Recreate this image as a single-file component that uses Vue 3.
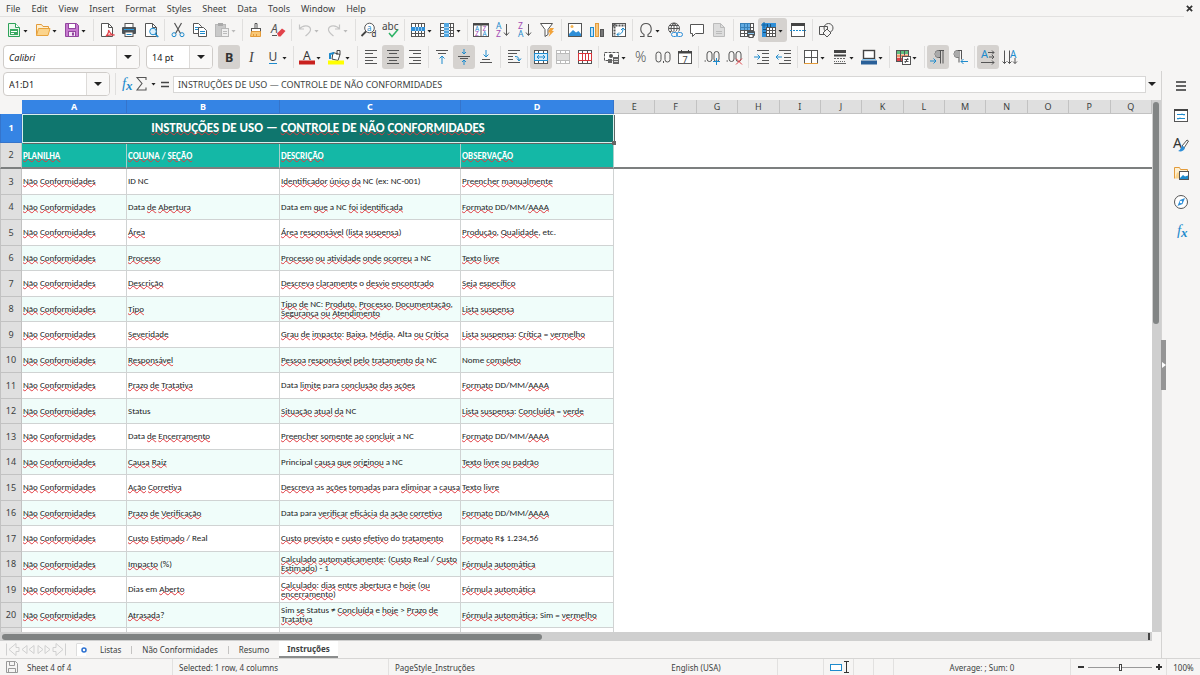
<script setup>
import { ref } from 'vue'

const K = '#555'
const B = '#1e8bcd'

const line = (d, c = K, w = 1) => `<path d="${d}" fill="none" stroke="${c}" stroke-width="${w}"/>`
const grid = (c = K) =>
  `<rect x="1.5" y="1.5" width="13" height="13" fill="#fff" stroke="${c}"/>` +
  line('M1.5 5.5h13M1.5 8.5h13M1.5 11.5h13M5.5 1.5v13M8.5 1.5v13M11.5 1.5v13', c)
const letter = (t, x, y, size, c = K, extra = '') =>
  `<text x="${x}" y="${y}" font-size="${size}" fill="${c}" font-family="Noto Sans, sans-serif" ${extra}>${t}</text>`
const lines = (rows, c = K) => line(rows.map(([x, y, w]) => `M${x} ${y}.5h${w}`).join(''), c)
const page = (c = K, f = '#fff') =>
  `<path d="M2.5 1.5h7l4 4v9h-11z" fill="${f}" stroke="${c}"/>` + line('M9.5 1.5v4h4', c)
const merge = (c, inner) =>
  `<rect x="1.5" y="1.5" width="13" height="13" fill="#fff" stroke="${c}"/>` +
  line('M1.5 4.5h13M1.5 11.5h13M5.5 1.5v3M10.5 1.5v3M5.5 11.5v3M10.5 11.5v3', c) + inner

const icons = {
  new: '<path d="M2.5 1.5h7l4 4v9h-11z" fill="#e9f7ec" stroke="#2fa35a"/><path d="M9.5 1.5v4h4" fill="#fff" stroke="#2fa35a"/><rect x="4" y="7" width="8" height="6" fill="#39a961"/><path d="M5 9.500h6M5 11.500h3" stroke="#fff"/>',
  open: '<path d="M1.500 13.500v-11h5l1.500 2h5.500v2" fill="#fdf0d3" stroke="#e39b3a"/><path d="M1.500 13.500l2-7h11.500l-2 7z" fill="#fbd48d" stroke="#e8a33d"/>',
  save: '<path d="M1.500 1.500h11l2 2v11h-13z" fill="#c77ad0" stroke="#93479f"/><rect x="4.500" y="1.500" width="7" height="5" fill="#fff" stroke="#93479f"/><rect x="4.500" y="9.500" width="7" height="5" fill="#f5e9f7" stroke="#93479f"/><path d="M9 10.500v3" stroke="#93479f" stroke-width="2"/>',
  pdf: page() + '<path d="M7 14c2-2 3-4 2.500-6c2 4 3 5 6 5c-3-.5-6 0-8.500 1" fill="none" stroke="#e2434b" stroke-width="1.300"/>',
  print: '<rect x="4" y="1.500" width="8" height="5" fill="#fff" stroke="#555"/><rect x="1" y="5" width="14" height="7" rx="1" fill="#4b5359"/><path d="M3 7.500h10" stroke="#2f9be0"/><rect x="4" y="10" width="8" height="4.500" fill="#fff" stroke="#555"/><path d="M5.500 12.500h5" stroke="#1e8bcd"/>',
  preview: page() + '<circle cx="10" cy="9.500" r="3.300" fill="#dff0fb" stroke="#1e8bcd"/><path d="M12.300 12l3 3" stroke="#1e8bcd" stroke-width="1.500"/>',
  cut: line('M4.500 1l6 10.500M11.500 1l-6 10.500', K, 1.2) + '<circle cx="4" cy="12.700" r="2" fill="none" stroke="#1e8bcd"/><circle cx="12" cy="12.700" r="2" fill="none" stroke="#1e8bcd"/>',
  copy: '<path d="M1.500 1.500h5l3 3v7h-8z" fill="#fff" stroke="#555"/><path d="M3 5.500h5M3 7.500h4" stroke="#1e8bcd"/><path d="M6.500 5.500h5l3 3v6h-8z" fill="#fff" stroke="#555"/><path d="M8 9.500h5M8 11.500h5" stroke="#1e8bcd"/>',
  paste: '<rect x="1.500" y="2.500" width="10" height="12" fill="#c9c9c9" stroke="#b8b8b8"/><rect x="4" y="1" width="5" height="3" fill="#aaa"/><rect x="7.500" y="6.500" width="7" height="8" fill="#efefef" stroke="#b8b8b8"/><path d="M9 9.500h4M9 11.500h4" stroke="#bbb"/>',
  brush: '<path d="M7 1.500h2v5h-2z" fill="#fff" stroke="#555"/><rect x="3.500" y="6.500" width="9" height="3" fill="#fff" stroke="#555"/><path d="M3.500 9.500h9v5h-10z" fill="#f9c877" stroke="#e39b3a"/><path d="M5.500 14v-2M8.500 14v-2" stroke="#e39b3a"/>',
  clear: letter('A', 1, 11, 12, K, 'font-style="italic"') + '<path d="M2 13.500h5" stroke="#555"/><path d="M7 11.500l5-5 3.500 2.500-5 5.500h-2z" fill="#e2434b"/>',
  undo: line('M2.500 2.500v4.500h4.500M2.500 7c3-4 10-4.500 11 0c.5 3-2.500 5-5 7', '#c4c4c4', 1.2),
  redo: line('M13.500 2.500v4.500h-4.500M13.500 7c-3-4-10-4.500-11 0c-.5 3 2.500 5 5 7', '#c4c4c4', 1.2),
  find: '<circle cx="8.500" cy="6" r="4.800" fill="#fff" stroke="#555"/><path d="M5 9.500l-4.500 4.500" stroke="#444" stroke-width="1.800"/>' + letter('a', 6, 9, 8, B) + letter('d', 10.5, 15, 8, '#333'),
  spell: letter('abc', -1, 8, 10, '#444') + line('M6 11l3 3.500 6-7', '#2eb366', 1.5),
  row: grid() + '<path d="M1 5h14v4h-14z" fill="#2f8fd8"/>' + line('M5.5 5v4M8.5 5v4M11.5 5v4', '#8cc4ee'),
  col: grid() + '<path d="M5 1h5v14h-5z" fill="#53a8e2"/>' + line('M5 5.5h5M5 8.5h5M5 11.5h5', '#a9d4f2'),
  sort: '<rect x=".5" y="1.500" width="15" height="13" fill="#fff" stroke="#555"/><path d="M0 2.500h16" stroke="#444" stroke-width="2"/><path d="M8 2v13" stroke="#555"/>' + letter('A', 2, 8.7, 6.5, B) + letter('Z', 2, 14.3, 6.5, '#a24bb3') + letter('Z', 9.5, 8.7, 6.5, '#a24bb3') + letter('A', 9.5, 14.3, 6.5, B),
  az: letter('A', 1, 7, 8.5, B) + letter('Z', 1, 15, 8.5, '#a24bb3') + line('M11.500 2v11M9 10.500l2.500 3 2.500-3'),
  za: letter('Z', 1, 7, 8.5, '#a24bb3') + letter('A', 1, 15, 8.5, B) + line('M11.500 2v11M9 10.500l2.500 3 2.500-3'),
  filter: '<path d="M1.500 1.500h12l-4.500 6v5l-3 2v-7z" fill="#fff" stroke="#555"/><path d="M11 6h4l-2 3h2l-5.500 6 1.500-4.500h-2z" fill="#f2a33a"/>',
  image: '<rect x="1.500" y="1.500" width="13" height="13" fill="#fff" stroke="#555"/><path d="M2 12l4-4 3 2.500 2.500-1.500 2.500 3v2h-12z" fill="#2f8fd8"/><circle cx="5" cy="4.500" r="1.500" fill="#f5b451"/>',
  chart: '<rect x="1.500" y="5.500" width="3" height="9" fill="#bfe0f7" stroke="#1e8bcd"/><rect x="6.500" y="1.500" width="3" height="13" fill="#f7c77f" stroke="#e39b3a"/><rect x="11.500" y="7.500" width="3" height="7" fill="#777" stroke="#555"/>',
  pivot: '<rect x="1.500" y="1.500" width="13" height="13" fill="#fff" stroke="#555"/><path d="M1.500 3.500h13M3.500 1.500v13" stroke="#555" stroke-width="2" stroke-dasharray="2 1"/>' + line('M6 12.500c4 0 6-2 6-6M10 8l2-2 2 2M8 10.500l-2 2 2 2', B),
  omega: line('M2 14.500h4v-2c-5-3-4-11 2-11s7 8 2 11v2h4', K, 1.1),
  link: '<circle cx="7" cy="6.500" r="5.500" fill="#fff" stroke="#555"/>' + line('M1.500 6.500h11M7 1v11M3 3.500h8M3 9.500h4M7 1c-4 3-4 8 0 11M7 1c4 3 4 7 1 9') + '<path d="M4 9.500h12v6h-12z" fill="#f6f5f4"/><rect x="4.500" y="10.500" width="6" height="4" rx="2" fill="none" stroke="#2f8fd8"/><rect x="9.500" y="10.500" width="6" height="4" rx="2" fill="none" stroke="#2f8fd8"/>',
  comment: '<path d="M1.500 2.500h13v9h-8l-3 3v-3h-2z" fill="#fff" stroke="#555"/>',
  header: page('#bbb', '#ddd') + '<path d="M5 9.500h6M5 11.500h6" stroke="#bbb"/>',
  printarea: grid() + '<path d="M1 1h10v7h-10z" fill="#2f8fd8" opacity=".75"/><rect x="8" y="9" width="8" height="5" rx="1" fill="#4b5359"/><path d="M9 11.500h6" stroke="#8cc8f2"/><rect x="10" y="12.500" width="4" height="3" fill="#fff" stroke="#555"/>',
  freeze: grid() + '<path d="M1 1h14v4h-14zM1 1h4v14h-4z" fill="#2f8fd8"/><path d="M6.500 2v3M9.500 2v3M2 7.500h3M2 10.500h3" stroke="#174f7c"/><path d="M3 0v6M0 3h6" stroke="#1566a3"/>',
  split: '<rect x="1.500" y="1.500" width="13" height="13" fill="#fff" stroke="#555"/><path d="M1 2.500h14" stroke="#444" stroke-width="3"/><path d="M0 8.500h16" stroke="#1e8bcd" stroke-dasharray="2 1"/>',
  shapes: '<path d="M1.500 4.500h8v8h-8z" fill="none" stroke="#555"/><circle cx="10.500" cy="6" r="4.500" fill="none" stroke="#555"/><path d="M9 7l4 4-4 4-4-4z" fill="#f6f5f4" stroke="#555"/>',
  bold: letter('B', 4, 12.500, 12.5, '#333', 'font-weight="700"'),
  italic: '<text x="6" y="12.500" font-size="14" font-style="italic" fill="#444" font-family="Liberation Serif, serif">I</text>',
  underline: letter('U', 3.5, 11.500, 12, '#444') + '<path d="M4 14.500h8" stroke="#1e8bcd"/>',
  fontcolor: letter('A', 4, 10.500, 12, '#333') + '<path d="M0 13.500h16" stroke="#c9211e" stroke-width="4"/>',
  fill: '<path d="M5 3.500l7 2-2 6-6-1.500z" fill="#fff" stroke="#444"/><path d="M2 10v-5l4-1" fill="none" stroke="#1e8bcd" stroke-width="2"/><path d="M9 6v-4.500h3v4" fill="none" stroke="#444"/><path d="M0 13.500h16" stroke="#ff0" stroke-width="4"/>',
  left: lines([[2, 1, 12], [2, 4, 8], [2, 8, 12], [2, 11, 8], [2, 14, 12]]),
  center: lines([[2, 1, 12], [4, 4, 8], [2, 8, 12], [4, 11, 8], [2, 14, 12]]),
  right: lines([[2, 1, 12], [6, 4, 8], [2, 8, 12], [6, 11, 8], [2, 14, 12]]),
  top: lines([[2, 1, 12], [4, 4, 8]]) + line('M8 15v-8M5.500 9.500l2.500-2.500 2.500 2.500', B),
  middle: lines([[2, 7, 12], [4, 9, 8]]) + line('M8 0v5M6 3l2 2 2-2M8 16v-5M6 13l2-2 2 2', B),
  bottom: lines([[4, 10, 8], [2, 13, 12]]) + line('M8 1v7M5.500 5.500l2.500 2.500 2.500-2.500', B),
  wrap: lines([[2, 1, 12], [2, 4, 9], [2, 7, 5], [2, 10, 5], [2, 13, 12]]) + line('M9 7.500c3 0 4 1 4 4M11 9.500l2 2.500 2-2.500', B),
  merge: merge(K, '<rect x="1.500" y="4.500" width="13" height="7" fill="#d8edfb" stroke="#1e8bcd"/>' + line('M4 8h8M6 6l-2 2 2 2M10 6l2 2-2 2', B)),
  mergecells: merge('#bbb', '<rect x="2" y="5" width="12" height="6" fill="#ddd"/>'),
  unmerge: merge(K, '<rect x="1.500" y="4.500" width="13" height="7" fill="#fff" stroke="#d8343a"/>' + line('M5.500 4.500v7M8.500 4.500v7M11.500 4.500v7', '#d8343a')),
  currency: '<rect x="0.500" y="3.500" width="14" height="8" fill="#fff" stroke="#555" stroke-dasharray="3 1"/><circle cx="7" cy="7" r="2" fill="#555"/><path d="M4 10h4v4h-4zM9 8h6v7h-6z" fill="#666"/><path d="M10 10.500h4M10 12.500h4" stroke="#ddd"/>',
  percent: letter('%', 2, 13, 14, K, 'font-weight="300"'),
  number: '<rect x="1" y="3" width="5" height="10" rx="2.500" fill="none" stroke="#555"/><rect x="10" y="3" width="5" height="10" rx="2.500" fill="none" stroke="#555"/><path d="M8.500 12v2" stroke="#555"/>',
  date: '<rect x="1.500" y="2.500" width="13" height="12" fill="#fff" stroke="#555"/><path d="M1 3.500h14" stroke="#444" stroke-width="2"/><path d="M4.500 1v3M11.500 1v3" stroke="#444"/>' + letter('7', 5.500, 13.500, 9, '#444'),
  adddec: '<rect x="3" y="2.500" width="5" height="10" rx="2.500" fill="none" stroke="#555"/><rect x="10" y="2.500" width="5" height="10" rx="2.500" fill="none" stroke="#555"/><path d="M.5 12h1.500" stroke="#555"/><path d="M9 12.500h7M12.500 9v7" stroke="#1e8bcd"/>',
  deldec: '<rect x="3" y="2.500" width="5" height="10" rx="2.500" fill="none" stroke="#555"/><rect x="10" y="2.500" width="5" height="10" rx="2.500" fill="none" stroke="#555"/><path d="M.5 12h1.500" stroke="#555"/><path d="M10 9.500l6 6M16 9.500l-6 6" stroke="#e2434b"/>',
  indent: lines([[3, 1, 12], [8, 4, 7], [8, 8, 7], [8, 11, 7], [3, 14, 12]]) + line('M0 8h6M3.500 5.500l2.500 2.500-2.500 2.500', B),
  outdent: lines([[3, 1, 12], [8, 4, 7], [8, 8, 7], [8, 11, 7], [3, 14, 12]]) + line('M0 8h6M2.500 5.500l-2.500 2.500 2.500 2.500', B),
  borders: '<rect x="1.500" y="1.500" width="13" height="13" fill="#fff" stroke="#555"/>' + line('M8.500 1.500v13M1.500 8.500h13') + line('M1 14.500h14', '#e39b3a'),
  borderstyle: '<path d="M2 2.500h12" stroke="#444" stroke-width="3"/><path d="M2 6.500h12" stroke="#444" stroke-width="2"/><path d="M2 9.500h12" stroke="#666" stroke-dasharray="2 1"/><path d="M2 12.500h12" stroke="#666" stroke-dasharray="1 1"/><path d="M2 14.500h12" stroke="#666"/>',
  bordercolor: '<rect x="2.500" y="1.500" width="11" height="8" fill="#fff" stroke="#444" stroke-width="1.400"/><path d="M1 10.500h14" stroke="#8cc8f2"/><path d="M0 13.500h16" stroke="#2a6099" stroke-width="4"/>',
  cond: '<rect x="1.500" y="1.500" width="12" height="11" fill="#fff" stroke="#555"/><path d="M2 2h11v3h-11z" fill="#5fbf7e"/><path d="M2 5.500h11v3h-11z" fill="#f0956a"/><path d="M2 9h6v3h-6z" fill="#e2434b"/>' + line('M5.500 1.500v11M9.500 1.500v5') + '<rect x="7.500" y="7.500" width="8" height="8" fill="#fff" stroke="#555"/>' + line('M9.500 10.500h4M9.500 12.500h4M13 9l-3 5'),
  ltr: line('M14 1.500h-5.500a3.500 3.500 0 0 0 0 7h1.500M10.500 1.500v13M13 1.500v13') + '<path d="M9 2h-1a3 3 0 0 0 0 6h2v-6z" fill="#aaa"/>' + line('M0 12h6M3.500 9.500l2.500 2.500-2.500 2.500', B),
  rtl: line('M10 1.500h-4.500a3.500 3.500 0 0 0 0 7h1M7 1.500v12M9.500 1.500v9') + '<path d="M6 2h-1a3 3 0 0 0 0 6h2v-6z" fill="#aaa"/>' + line('M9 12.500h7M11.500 10l-2.500 2.500 2.500 2.500', B),
  horiz: letter('A', 1, 9, 11, B) + line('M8 3.500h6M12 1.500l2 2-2 2M9 8h5M12 6l2 2-2 2M1 13.500h13M12 11.500l2 2-2 2'),
  vert: letter('A', 8, 9, 10, B) + line('M2.500 1.500v13M.5 12.500l2 2 2-2M7.500 1.500v13M5.500 12.500l2 2 2-2M13 9v5.500M11 12.500l2 2 2-2'),
  fx: '<text x="4" y="12" font-size="15" font-style="italic" fill="#1e8bcd" font-family="Liberation Serif, serif">f</text><text x="8" y="14" font-size="13" font-style="italic" font-weight="700" fill="#1e8bcd" font-family="Liberation Serif, serif">x</text>',
  sum: line('M12 4v-2.500h-9l5 6-5 6.500h9v-2.500', K, 1.1),
  equal: '<path d="M4 6.500h8M4 10.500h8" stroke="#444" stroke-width="1.500"/>',
  menu: '<path d="M3 4h10M3 8h10M3 12h10" stroke="#333" stroke-width="1.500"/>',
  props: '<rect x="1.500" y="2.500" width="13" height="12" fill="#fff" stroke="#555"/><path d="M1 3h14" stroke="#444" stroke-width="2"/><path d="M4 7.500h8M4 11.500h8" stroke="#1e8bcd"/><path d="M9 6.500l2 2M7 10.500l-2 2" stroke="#1e8bcd"/>',
  styles: letter('A', 0, 12, 14, '#333') + '<path d="M9 10l5-6 1.500 1-4.500 7z" fill="#fff" stroke="#555"/><path d="M10 10l2 2c-1 3-4 4-7 3c3-1 2-4 5-5" fill="#2f8fd8"/>',
  gallery: '<path d="M1.500 13.500v-11h5l1 2h7v2" fill="#fdf0d3" stroke="#e39b3a"/><path d="M2 13.500l2-6h4v6z" fill="#fbd48d"/><rect x="6.500" y="6.500" width="9" height="8" fill="#fff" stroke="#555"/><path d="M7 13l3-3 2 1.500 3-1v3.500h-8z" fill="#1e8bcd"/>',
  navigator: '<circle cx="8" cy="8" r="6.500" fill="#fff" stroke="#555"/><path d="M12 4l-2.500 6-5 2 2.500-6z" fill="#2f8fd8"/><circle cx="8" cy="8" r="1.200" fill="#fff"/>',
  addsheet: '<path d="M2.500 2v12M2.500 1.500h6l2 2" fill="none" stroke="#ddd"/><path d="M3 2h6l3 3v9h-9z" fill="#fff"/><circle cx="10" cy="8" r="2" fill="none" stroke="#2a6fd0" stroke-width="1.500"/>',
  floppy: '<path d="M2.500 2.500h9l2 2v9h-11z" fill="none" stroke="#999"/><path d="M5.500 2.500v4h5v-4M4.500 13.500v-4h7v4" fill="none" stroke="#999"/>'
}

const menus = ['File', 'Edit', 'View', 'Insert', 'Format', 'Styles', 'Sheet', 'Data', 'Tools', 'Window', 'Help']

const sep = { sep: 'thin' }
const wide = { sep: 'wide' }
const b = (icon, label, opts = {}) => ({ icon, label, ...opts })
const dd = { drop: true }

const standardBar = [
  b('new', 'New', dd), b('open', 'Open', dd), b('save', 'Save', dd), wide,
  b('pdf', 'Export as PDF'), b('print', 'Print'), b('preview', 'Print preview'), sep,
  b('cut', 'Cut'), b('copy', 'Copy'), b('paste', 'Paste', { drop: true, off: true }), sep,
  b('brush', 'Clone formatting'), b('clear', 'Clear formatting'), sep,
  b('undo', 'Undo', { drop: true, off: true }), b('redo', 'Redo', { drop: true, off: true }), wide,
  b('find', 'Find and replace'), b('spell', 'Spelling'), sep,
  b('row', 'Row', dd), b('col', 'Column', dd), sep,
  b('sort', 'Sort'), b('az', 'Sort ascending'), b('za', 'Sort descending'), b('filter', 'AutoFilter'), wide,
  b('image', 'Insert image'), b('chart', 'Insert chart'), b('pivot', 'Pivot table'), sep,
  b('omega', 'Special character', dd), b('link', 'Insert hyperlink'), b('comment', 'Insert comment'), b('header', 'Headers and footers', { off: true }), wide,
  b('printarea', 'Define print area'), b('freeze', 'Freeze rows and columns', { drop: true, on: true }), b('split', 'Split window'), wide,
  b('shapes', 'Show draw functions')
]

const formatBar = [
  b('bold', 'Bold', { on: true }), b('italic', 'Italic'), b('underline', 'Underline', dd), sep,
  b('fontcolor', 'Font color', dd), b('fill', 'Background color', dd), wide,
  b('left', 'Align left'), b('center', 'Center horizontally', { on: true }), b('right', 'Align right'), sep,
  b('top', 'Align top'), b('middle', 'Center vertically', { on: true }), b('bottom', 'Align bottom'), wide,
  b('wrap', 'Wrap text'), sep,
  b('merge', 'Merge and center', { on: true }), b('mergecells', 'Merge cells', { off: true }), b('unmerge', 'Unmerge cells'), sep,
  b('currency', 'Currency', dd), b('percent', 'Percent'), b('number', 'Number'), b('date', 'Date'), sep,
  b('adddec', 'Add decimal place'), b('deldec', 'Delete decimal place'), wide,
  b('indent', 'Increase indent'), b('outdent', 'Decrease indent'), sep,
  b('borders', 'Borders', dd), b('borderstyle', 'Border style', dd), b('bordercolor', 'Border color', dd), sep,
  b('cond', 'Conditional', dd), wide,
  b('ltr', 'Left to right', { on: true }), b('rtl', 'Right to left'), wide,
  b('horiz', 'Text direction horizontal', { on: true }), b('vert', 'Text direction vertical')
]

const sideBar = [
  b('menu', 'Sidebar settings'), b('props', 'Properties'), b('styles', 'Styles'),
  b('gallery', 'Gallery'), b('navigator', 'Navigator'), b('fx', 'Functions')
]

const fontName = ref('Calibri')
const fontSize = ref('14 pt')
const cellRef = ref('A1:D1')
const formula = ref('INSTRUÇÕES DE USO — CONTROLE DE NÃO CONFORMIDADES')

const dataCols = ['A', 'B', 'C', 'D']
const freeCols = [...'EFGHIJKLMNOPQ']

// Words inside [brackets] are flagged by the spell checker.
const parse = (s) =>
  s.split(/(\[[^\]]*\])/).filter(Boolean).map((t) =>
    t[0] === '[' ? { text: t.slice(1, -1), bad: true } : { text: t, bad: false })

const title = parse('[INSTRUÇÕES] DE USO — [CONTROLE] DE [NÃO] [CONFORMIDADES]')
const heads = ['[PLANILHA]', '[COLUNA] / [SEÇÃO]', '[DESCRIÇÃO]', '[OBSERVAÇÃO]'].map(parse)

const date = '[Formato] DD/MM/[AAAA]'
const rows = [
  ['ID NC', '[Identificador] [único] [da] NC (ex: NC-001)', '[Preencher] [manualmente]'],
  ['Data [de] [Abertura]', 'Data em [que] a NC [foi] [identificada]', date],
  ['[Área]', '[Área] [responsável] ([lista] [suspensa])', '[Produção], [Qualidade], etc.'],
  ['[Processo]', '[Processo] [ou] [atividade] [onde] [ocorreu] a NC', '[Texto] [livre]'],
  ['[Descrição]', '[Descreva] [claramente] o [desvio] [encontrado]', '[Seja] [específico]'],
  ['[Tipo]', '[Tipo] [de] NC: [Produto], [Processo], [Documentação], [Segurança] [ou] [Atendimento]', '[Lista] [suspensa]'],
  ['[Severidade]', '[Grau] [de] [impacto]: [Baixa], [Média], Alta [ou] [Crítica]', '[Lista] [suspensa]: [Crítica] = [vermelho]'],
  ['[Responsável]', '[Pessoa] [responsável] [pelo] [tratamento] [da] NC', 'Nome [completo]'],
  ['[Prazo] [de] [Tratativa]', 'Data [limite] para [conclusão] [das] [ações]', date],
  ['Status', '[Situação] [atual] [da] NC', '[Lista] [suspensa]: [Concluída] = [verde]'],
  ['Data [de] [Encerramento]', '[Preencher] [somente] [ao] [concluir] a NC', date],
  ['[Causa] [Raiz]', 'Principal [causa] [que] [originou] a NC', '[Texto] [livre] [ou] [padrão]'],
  ['[Ação] [Corretiva]', '[Descreva] as [ações] [tomadas] para [eliminar] a [causa]', '[Texto] [livre]'],
  ['[Prazo] [de] [Verificação]', 'Data para [verificar] [eficácia] [da] [ação] [corretiva]', date],
  ['[Custo] [Estimado] / Real', '[Custo] [previsto] e [custo] [efetivo] do [tratamento]', '[Formato] R$ 1.234,56'],
  ['[Impacto] (%)', '[Calculado] [automaticamente]: ([Custo] Real / [Custo] [Estimado]) - 1', '[Fórmula] [automática]'],
  ['Dias em [Aberto]', '[Calculado]: [dias] [entre] [abertura] e [hoje] ([ou] [encerramento])', '[Fórmula] [automática]'],
  ['[Atrasada]?', 'Sim [se] Status ≠ [Concluída] e [hoje] > [Prazo] [de] [Tratativa]', '[Fórmula] [automática]; Sim = [vermelho]']
].map((r) => ['[Não] [Conformidades]', ...r].map(parse))

const tabs = ['Listas', 'Não Conformidades', 'Resumo', 'Instruções']
const activeTab = ref('Instruções')
const zoom = ref(50)
</script>

<template>
  <div class="app">
    <nav class="menubar">
      <button v-for="m in menus" :key="m" class="menu">{{ m }}</button>
      <button class="close" aria-label="Close document">
        <svg viewBox="0 0 8 8"><path d="M1 1l6 6M7 1l-6 6" stroke="#333" stroke-width="2" /></svg>
      </button>
    </nav>

    <div class="toolbar">
      <template v-for="(t, i) in standardBar" :key="i">
        <span v-if="t.sep" class="sep" :class="t.sep"></span>
        <button v-else class="tool" :class="{ on: t.on, off: t.off }" :aria-label="t.label">
          <svg class="icon" viewBox="0 0 16 16" v-html="icons[t.icon]"></svg>
          <span v-if="t.drop" class="arrow"></span>
        </button>
      </template>
    </div>

    <div class="toolbar formatting">
      <div class="combo font-name">
        <input v-model="fontName" aria-label="Font name" />
        <button aria-label="Font list"><span class="arrow big"></span></button>
      </div>
      <div class="combo font-size">
        <input v-model="fontSize" aria-label="Font size" />
        <button aria-label="Size list"><span class="arrow big"></span></button>
      </div>
      <template v-for="(t, i) in formatBar" :key="i">
        <span v-if="t.sep" class="sep" :class="t.sep"></span>
        <button v-else class="tool" :class="{ on: t.on, off: t.off }" :aria-label="t.label">
          <svg class="icon" viewBox="0 0 16 16" v-html="icons[t.icon]"></svg>
          <span v-if="t.drop" class="arrow"></span>
        </button>
      </template>
    </div>

    <div class="body">
      <main class="work">
        <div class="formulabar">
          <div class="combo cell-ref">
            <input v-model="cellRef" aria-label="Name box" />
            <button aria-label="Names"><span class="arrow big"></span></button>
          </div>
          <span class="sep wide"></span>
          <button class="small" aria-label="Function wizard"><svg class="icon" viewBox="0 0 16 16" v-html="icons.fx"></svg></button>
          <button class="small select-fn" aria-label="Select function">
            <svg class="icon" viewBox="0 0 16 16" v-html="icons.sum"></svg><span class="arrow"></span>
          </button>
          <button class="small" aria-label="Formula"><svg class="icon" viewBox="0 0 16 16" v-html="icons.equal"></svg></button>
          <input v-model="formula" class="formula" aria-label="Input line" />
          <button class="expand" aria-label="Expand formula bar"><span class="arrow big"></span></button>
        </div>

        <div class="sheet">
          <div class="cells">
            <table>
              <colgroup>
                <col class="w-num" /><col class="w-a" /><col class="w-b" /><col class="w-c" /><col class="w-d" />
                <col v-for="c in freeCols" :key="c" />
              </colgroup>
              <thead>
                <tr class="letters">
                  <th class="corner"></th>
                  <th v-for="c in dataCols" :key="c" class="sel">{{ c }}</th>
                  <th v-for="c in freeCols" :key="c">{{ c }}</th>
                </tr>
              </thead>
              <tbody>
                <tr class="title-row">
                  <th class="num sel">1</th>
                  <td colspan="4" class="title">
                    <span v-for="(p, i) in title" :key="i" :class="{ bad: p.bad }">{{ p.text }}</span>
                    <i class="handle"></i>
                  </td>
                  <td colspan="13" class="free"></td>
                </tr>
                <tr class="head-row">
                  <th class="num">2</th>
                  <td v-for="(h, i) in heads" :key="i" class="head">
                    <span v-for="(p, j) in h" :key="j" :class="{ bad: p.bad }">{{ p.text }}</span>
                  </td>
                  <td colspan="13" class="free"></td>
                </tr>
                <tr v-for="(r, n) in rows" :key="n" class="row" :class="{ tint: n % 2 }">
                  <th class="num">{{ n + 3 }}</th>
                  <td v-for="(cell, i) in r" :key="i" class="cell">
                    <span v-for="(p, j) in cell" :key="j" :class="{ bad: p.bad }">{{ p.text }}</span>
                  </td>
                  <td colspan="13" class="free"></td>
                </tr>
                <tr class="row">
                  <th class="num"></th>
                  <td class="cell"></td>
                  <td class="cell"></td>
                  <td class="cell">Média de dias entre abertura e encerramento das NCs</td>
                  <td class="cell"></td>
                  <td colspan="13" class="free"></td>
                </tr>
              </tbody>
            </table>
          </div>
          <div class="vscroll"><div class="vthumb"></div></div>
        </div>
        <div class="hscroll"><div class="hthumb"></div><i class="grip"></i></div>

        <div class="tabs">
          <svg class="tabnav" viewBox="0 0 62 14" fill="none" stroke="#d0d0d0">
            <path d="M1.500 1v12M11 1l-7 6 7 6v-4h3v-4h-3zM22 3l-5 4 5 4zM29 3l-5 4 5 4zM33 3l5 4-5 4zM40 3l5 4-5 4zM51 1l7 6-7 6v-4h-3v-4h3zM60.500 1v12" />
          </svg>
          <button class="add" aria-label="Add sheet"><svg class="icon" viewBox="0 0 16 16" v-html="icons.addsheet"></svg></button>
          <button v-for="t in tabs" :key="t" class="tab" :class="{ active: t === activeTab }" @click="activeTab = t">{{ t }}</button>
        </div>
      </main>

      <aside class="side">
        <button v-for="s in sideBar" :key="s.label" class="side-btn" :aria-label="s.label">
          <svg class="icon" viewBox="0 0 16 16" v-html="icons[s.icon]"></svg>
        </button>
        <button class="collapse" aria-label="Hide sidebar">
          <svg viewBox="0 0 4 6"><path d="M0 0l4 3-4 3z" fill="#fff" /></svg>
        </button>
      </aside>
    </div>

    <footer class="status">
      <div class="first"><svg class="icon" viewBox="0 0 16 16" v-html="icons.floppy"></svg>Sheet 4 of 4</div>
      <div>Selected: 1 row, 4 columns</div>
      <div class="plain">PageStyle_Instruções</div>
      <div class="mid">English (USA)</div>
      <div></div>
      <div class="mode">
        <svg viewBox="0 0 20 12"><rect x=".5" y="3.500" width="11" height="6" fill="#fff" stroke="#1e8bcd" /><path d="M14 .5h5M14 11.500h5M16.500 .5v11" stroke="#333" /></svg>
      </div>
      <div></div>
      <div></div>
      <div class="mid">Average: ; Sum: 0</div>
      <div class="zoom">
        <button aria-label="Zoom out"><svg viewBox="0 0 8 8"><path d="M1 4h6" stroke="#333" stroke-width="2" /></svg></button>
        <input v-model="zoom" type="range" min="0" max="100" aria-label="Zoom" />
        <button aria-label="Zoom in"><svg viewBox="0 0 8 8"><path d="M1 4h6M4 1v6" stroke="#333" stroke-width="2" /></svg></button>
      </div>
      <div class="mid last">100%</div>
    </footer>
  </div>
</template>

<style>
body {
  background: #f6f5f4;
}
</style>

<style scoped>
* {
  box-sizing: border-box;
}
.app {
  display: flex;
  flex-direction: column;
  height: 100vh;
  overflow: hidden;
  background: #f6f5f4;
  color: #3c3f41;
  font: 9px "Noto Sans", sans-serif;
}
button {
  display: flex;
  align-items: center;
  justify-content: center;
  margin: 0;
  padding: 0;
  border: 0;
  background: none;
  color: inherit;
  font: inherit;
}
input {
  min-width: 0;
  margin: 0;
  border: 0;
  background: none;
  color: inherit;
  font: inherit;
  outline: none;
}
.icon {
  flex: none;
  width: 16px;
  height: 16px;
  overflow: visible;
}
.menubar {
  display: flex;
  align-items: center;
  gap: 11px;
  flex: none;
  height: 17px;
  margin-right: 16px;
  padding-left: 6px;
  border-bottom: 1px solid #e2e1e0;
}
.close {
  margin-left: auto;
  margin-right: -9px;
}
.close svg {
  width: 7px;
  height: 7px;
}
.toolbar {
  display: flex;
  align-items: center;
  flex: none;
  height: 26px;
  padding-left: 3px;
}
.formatting {
  height: 28px;
}
.tool {
  height: 24px;
  padding: 0 3px;
  border-radius: 3px;
}
.tool.on {
  background: #d5d2cf;
}
.arrow {
  width: 7px;
  height: 3px;
  background: #222;
  clip-path: polygon(1px 0, 6px 0, 50% 100%);
}
.tool .arrow {
  margin-top: 2px;
}
.off .arrow {
  background: #bbb;
}
.arrow.big {
  width: 8px;
  height: 4px;
  clip-path: polygon(0 0, 100% 0, 50% 100%);
}
.sep {
  flex: none;
  width: 5px;
  height: 22px;
  background: linear-gradient(#e0dfde, #e0dfde) center / 1px 100% no-repeat;
}
.sep.wide {
  width: 6px;
}
.combo {
  display: flex;
  flex: none;
  height: 24px;
  border: 1px solid #cfccc9;
  border-radius: 4px;
  background: #fff;
  color: #222;
}
.combo input {
  flex: 1;
  padding: 0 5px;
}
.combo button {
  width: 23px;
  border-left: 1px solid #dddbd9;
  border-radius: 0 3px 3px 0;
  background: #f9f8f7;
}
.font-name {
  width: 137px;
  margin-right: 6px;
  font-style: italic;
}
.font-size {
  width: 67px;
  margin-right: 5px;
}
.cell-ref {
  width: 107px;
  margin-right: 2px;
}
.body {
  display: flex;
  flex: 1;
  min-height: 0;
}
.work {
  display: flex;
  flex: 1;
  flex-direction: column;
  min-width: 0;
  border-right: 1px solid #d4d3d2;
}
.formulabar {
  display: flex;
  align-items: center;
  flex: none;
  height: 29px;
  padding: 0 3px 3px;
}
.small {
  width: 16px;
}
.select-fn {
  width: 23px;
}
.formula {
  flex: 1;
  height: 17px;
  padding: 0 4px;
  border: 1px solid #d8d7d6;
  background: #fff;
}
.expand {
  width: 12px;
}
.sheet {
  display: flex;
  flex: 1;
  min-height: 0;
}
.cells {
  flex: 1;
  min-width: 0;
  overflow: hidden;
  background: #fff;
}
table {
  width: 100%;
  table-layout: fixed;
  border-collapse: separate;
  border-spacing: 0;
}
.w-num { width: 22px; }
.w-a { width: 105px; }
.w-b { width: 153px; }
.w-c { width: 181px; }
.w-d { width: 153px; }
th,
td {
  padding: 0;
  overflow: hidden;
}
.letters th {
  height: 14px;
  border-right: 1px solid #c2c2c2;
  border-bottom: 1px solid #c2c2c2;
  background: #dfdfdf;
  font-weight: 400;
  line-height: 12px;
}
.letters .corner {
  border-color: #f6f5f4;
  background: #f6f5f4;
}
.letters .sel {
  border-color: #3574cb;
  background: #3584e4;
  color: #fff;
  font-weight: 700;
}
.num {
  padding-bottom: 1px;
  border-right: 1px solid #c2c2c2;
  border-bottom: 1px solid #c2c2c2;
  border-left: 1px solid #c2c2c2;
  background: #dfdfdf;
  font-weight: 400;
}
.num.sel {
  border-color: #3574cb;
  background: #3584e4;
  color: #fff;
  font-weight: 700;
}
.title-row > * {
  height: 29px;
}
.title {
  position: relative;
  overflow: visible;
  padding-bottom: 3px;
  border: 1px solid #d9efec;
  background: #0f766e;
  box-shadow: 1px 1px 0 #5d6563;
  color: #fff;
  font: 700 13px "Carlito", Lato, sans-serif;
  text-align: center;
}
.handle {
  position: absolute;
  right: -3px;
  bottom: -3px;
  width: 4px;
  height: 4px;
  background: #666;
}
.head-row > * {
  height: 26px;
  border-bottom: 2px solid #7c7f7f;
}
.head {
  padding-left: 1px;
  border-right: 1px solid #a9cfca;
  background: #14b8a6;
  color: #fff;
  font: 700 9px "Carlito", Lato, sans-serif;
}
.row > * {
  height: 25px;
}
.row:nth-child(odd) > * {
  height: 26px;
}
.cell {
  padding: 0 0 2px 1px;
  border-right: 1px solid #d0d3d3;
  border-bottom: 1px solid #d0d3d3;
  color: #1c2526;
  font: 9px/9px "Carlito", Lato, sans-serif;
}
.tint .cell {
  background: #f0fdfa;
}
.bad {
  text-decoration: underline wavy #e0383e 1px;
  text-decoration-skip-ink: none;
  text-underline-offset: -1px;
}
.vscroll {
  flex: none;
  width: 9px;
  padding: 2px 2px 2px 1px;
  background: #cfcfcf;
}
.vthumb {
  width: 6px;
  height: 42%;
  border-radius: 3px;
  background: #828585;
}
.hscroll {
  display: flex;
  align-items: center;
  justify-content: space-between;
  flex: none;
  height: 9px;
  margin-right: 9px;
  padding: 0 2px;
  background: #cfcfcf;
}
.hthumb {
  width: 47%;
  height: 6px;
  border-radius: 3px;
  background: #7f8282;
}
.grip {
  width: 2px;
  height: 7px;
  background: #444;
}
.tabs {
  display: flex;
  flex: none;
  height: 17px;
  padding-left: 5px;
  font-size: 8px;
}
.tabnav {
  width: 62px;
  height: 17px;
}
.add {
  width: 22px;
  margin-left: 4px;
}
.tab {
  position: relative;
  padding: 0 7px;
}
.tab + .tab:not(.active) {
  margin-left: 7px;
}
.tab + .tab:not(.active)::before {
  position: absolute;
  left: -4px;
  width: 1px;
  height: 8px;
  background: #c4c3c2;
  content: "";
}
.tab.active {
  margin-left: 3px;
  padding: 0 8px;
  border-bottom: 2px solid #8b8d8d;
  background: #fff;
  font-weight: 700;
}
.side {
  position: relative;
  display: flex;
  flex: none;
  flex-direction: column;
  align-items: center;
  width: 38px;
}
.side-btn {
  width: 29px;
  height: 29px;
}
.collapse {
  position: absolute;
  top: calc(50% - 25px);
  left: -1px;
  width: 5px;
  height: 50px;
  background: #959595;
}
.collapse svg {
  width: 4px;
  height: 6px;
}
.status {
  display: grid;
  grid-template-columns: 173fr 216fr 226fr 163fr 46fr 30fr 20fr 20fr 177fr 96fr 33fr;
  flex: none;
  height: 17px;
  border-top: 1px solid #d6d5d4;
  font-size: 8px;
}
.status > div {
  display: flex;
  align-items: center;
  min-width: 0;
  padding-left: 6px;
  border-right: 1px solid #e2e1e0;
  white-space: nowrap;
}
.status .first {
  gap: 7px;
  padding-left: 4px;
}
.status .plain,
.status .last {
  border-right: 0;
}
.status .mid {
  justify-content: center;
  padding: 0;
}
.mode svg {
  width: 20px;
  height: 12px;
}
.zoom svg {
  width: 8px;
  height: 8px;
}
.zoom input {
  flex: 1;
  height: 8px;
  margin: 0 3px;
  appearance: none;
  background: linear-gradient(#999, #999) center / 100% 1px no-repeat;
}
.zoom input::-webkit-slider-thumb {
  width: 3px;
  height: 7px;
  border: 1px solid #444;
  appearance: none;
  background: #fff;
}
.zoom {
  padding-right: 3px;
}
</style>
